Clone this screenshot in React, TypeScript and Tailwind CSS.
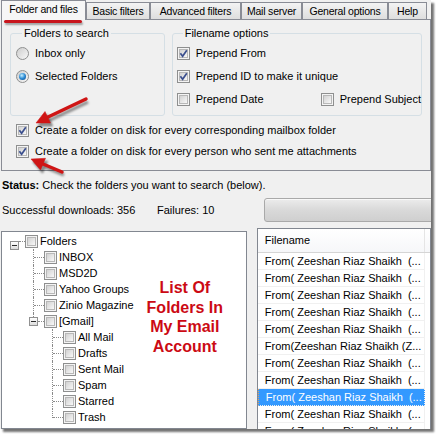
import React from 'react';

const Box = ({ checked = false }: { checked?: boolean }) => (
  <span className="relative flex h-[13px] w-[13px] shrink-0 items-center justify-center border border-[#8e8f8f] bg-[#f4f4f4]">
    <span className="h-[9px] w-[9px] border border-[#b8b8b8] bg-linear-to-br from-[#d2d2d2] to-[#f8f8f8]" />
    {checked && (
      <svg className="absolute left-[1px] top-[1px]" width="9" height="9" viewBox="0 0 9 9">
        <path d="M1.4 4.3 L3.6 7.2 L7.8 1.2" fill="none" stroke="#3b4f8e" strokeWidth="1.7" />
      </svg>
    )}
  </span>
);

const Radio = ({ on = false }: { on?: boolean }) => (
  <span className="flex h-[13px] w-[13px] shrink-0 items-center justify-center rounded-full border border-[#8e8f8f] bg-linear-to-br from-[#cdcdcd] to-[#f8f8f8]">
    {on && (
      <span className="h-[7px] w-[7px] rounded-full bg-[radial-gradient(circle_at_40%_35%,#c8f0ff_0%,#2a8ad4_50%,#0b3f7c_100%)]" />
    )}
  </span>
);

const Minus = () => (
  <span className="absolute top-[4px] flex h-[9px] w-[9px] items-center justify-center border border-[#919191] bg-linear-to-b from-white to-[#dcdcdc]">
    <span className="h-px w-[5px] bg-[#2b2b2b]" />
  </span>
);

const tabs = [
  { label: 'Basic filters', w: 'w-[64px]' },
  { label: 'Advanced filters', w: 'w-[91px]' },
  { label: 'Mail server', w: 'w-[61px]' },
  { label: 'General options', w: 'w-[86px]' },
  { label: 'Help', w: 'w-[39px]' },
];

const level1 = ['INBOX', 'MSD2D', 'Yahoo Groups', 'Zinio Magazine'];
const level2 = ['All Mail', 'Drafts', 'Sent Mail', 'Spam', 'Starred', 'Trash'];

const rows = [
  'From( Zeeshan Riaz Shaikh  (...',
  'From( Zeeshan Riaz Shaikh  (...',
  'From( Zeeshan Riaz Shaikh  (...',
  'From( Zeeshan Riaz Shaikh  (...',
  'From( Zeeshan Riaz Shaikh  (...',
  'From(Zeeshan Riaz Shaikh (Z...',
  'From( Zeeshan Riaz Shaikh  (...',
  'From( Zeeshan Riaz Shaikh  (...',
  'From( Zeeshan Riaz Shaikh  (...',
  'From( Zeeshan Riaz Shaikh  (...',
  'From( Zeeshan Riaz Shaikh  (...',
];

const App = () => {
  return (
    <div className="h-[434px] w-[436px] whitespace-nowrap bg-white font-['Liberation_Sans',Arial,sans-serif] text-[11px] leading-[13px] text-black">
      <div className="relative h-[429px] w-[431px] overflow-hidden bg-[#f0f0f0] shadow-[3px_3px_2px_rgba(0,0,0,0.55)]">
        {/* tabs */}
        <div className="flex h-[19px] items-end pl-px text-[10.5px] tracking-[-0.2px]">
          <div className="relative z-10 -mb-px flex h-[20px] w-[85px] items-center justify-center border border-b-0 border-[#898c95] bg-[#f6f6f6] pb-[3px]">
            Folder and files
            <span className="absolute left-[2px] top-[19px] h-[2.5px] w-[78px] rounded-full bg-[#c8141c] shadow-[1px_2px_2px_rgba(0,0,0,0.35)]" />
          </div>
          {tabs.map((t) => (
            <div
              key={t.label}
              className={`flex h-[17px] items-center justify-center border border-b-0 border-[#898c95] bg-linear-to-b from-[#f3f3f3] to-[#dedede] ${t.w}`}
            >
              {t.label}
            </div>
          ))}
        </div>

        {/* panel */}
        <div className="ml-px h-[152px] w-[430px] border border-[#898c95] bg-[#f0f0f0] px-[8px] pt-[7px]">
          <div className="flex gap-[7px]">
            <fieldset className="h-[89px] w-[158px] rounded-[3px] border border-[#d5dfe5] pl-[5px]">
              <legend className="ml-[6px] px-[2px] leading-[13px]">Folders to search</legend>
              <div className="flex flex-col pt-[2px]">
                <div className="flex h-[23px] items-center gap-[6px]">
                  <Radio />
                  <span>Inbox only</span>
                </div>
                <div className="flex h-[23px] items-center gap-[6px]">
                  <Radio on />
                  <span>Selected Folders</span>
                </div>
              </div>
            </fieldset>
            <fieldset className="h-[89px] w-[253px] rounded-[3px] border border-[#d5dfe5] pl-[4px]">
              <legend className="ml-[6px] px-[2px] leading-[13px]">Filename options</legend>
              <div className="flex flex-col pt-[2px]">
                <div className="flex h-[23px] items-center gap-[6px]">
                  <Box checked />
                  <span>Prepend From</span>
                </div>
                <div className="flex h-[23px] items-center gap-[6px]">
                  <Box checked />
                  <span>Prepend ID to make it unique</span>
                </div>
                <div className="flex h-[22px] items-center">
                  <div className="flex w-[144px] items-center gap-[6px]">
                    <Box />
                    <span>Prepend Date</span>
                  </div>
                  <div className="flex items-center gap-[6px]">
                    <Box />
                    <span>Prepend Subject</span>
                  </div>
                </div>
              </div>
            </fieldset>
          </div>
          <div className="mt-[4px] flex flex-col pl-[6px]">
            <div className="flex h-[21px] items-center gap-[6px]">
              <Box checked />
              <span>Create a folder on disk for every corresponding mailbox folder</span>
            </div>
            <div className="flex h-[21px] items-center gap-[6px]">
              <Box checked />
              <span>Create a folder on disk for every person who sent me attachments</span>
            </div>
          </div>
        </div>

        {/* status */}
        <div className="mt-[7px] h-[14px] pl-[2px] leading-[14px]">
          <span className="font-bold">Status:</span> Check the folders you want to search (below).
        </div>
        <div className="mt-[6px] flex h-[24px] items-center pl-[2px]">
          <span className="w-[155px]">Successful downloads: 356</span>
          <span>Failures: 10</span>
          <div className="ml-auto h-[24px] w-[170px] -mr-[3px] rounded-[3px] border border-[#a9a9a9] bg-linear-to-b from-[#ececec] via-[#d9d9d9] to-[#cfcfcf] shadow-[inset_0_1px_0_#f8f8f8]" />
        </div>

        {/* lower */}
        <div className="mt-[6px] flex gap-[10px] pl-px">
          <div className="relative mt-[3px] h-[198px] w-[247px] border border-[#828790] bg-white pt-px">
            <div className="relative flex h-4 items-center pl-[23px]">
              <span className="absolute left-[8px] top-[4px]"><Minus /></span>
              <span className="absolute left-[17px] top-[8px] w-[6px] border-t border-dotted border-[#8a8a8a]" />
              <Box />
              <span className="ml-[2px]">Folders</span>
            </div>
            {level1.map((n) => (
              <div key={n} className="relative flex h-4 items-center pl-[42px]">
                <span className="absolute left-[31px] top-0 h-4 border-l border-dotted border-[#8a8a8a]" />
                <span className="absolute left-[32px] top-[8px] w-[10px] border-t border-dotted border-[#8a8a8a]" />
                <Box />
                <span className="ml-[2px]">{n}</span>
              </div>
            ))}
            <div className="relative flex h-4 items-center pl-[42px]">
              <span className="absolute left-[31px] top-0 h-[4px] border-l border-dotted border-[#8a8a8a]" />
              <span className="absolute left-[27px] top-0"><Minus /></span>
              <span className="absolute left-[36px] top-[8px] w-[6px] border-t border-dotted border-[#8a8a8a]" />
              <Box />
              <span className="ml-[2px]">[Gmail]</span>
            </div>
            {level2.map((n, i) => (
              <div key={n} className="relative flex h-4 items-center pl-[61px]">
                <span
                  className={`absolute left-[50px] top-0 border-l border-dotted border-[#8a8a8a] ${i === level2.length - 1 ? 'h-[9px]' : 'h-4'}`}
                />
                <span className="absolute left-[51px] top-[8px] w-[10px] border-t border-dotted border-[#8a8a8a]" />
                <Box />
                <span className="ml-[2px]">{n}</span>
              </div>
            ))}
            <div className="absolute right-0 top-[46px] w-[122px] text-center text-[16px] font-bold leading-[19.5px] text-[#cc0a14]">
              List Of
              <br />
              Folders In
              <br />
              My Email
              <br />
              Account
            </div>
          </div>

          <div className="h-[205px] w-[175px] border border-[#828790] bg-white">
            <div className="flex h-[24px] border-b border-[#d5d5d5] bg-linear-to-b from-white to-[#f6f7f9]">
              <div className="flex w-[167px] items-center border-r border-[#e5e5e5] pl-[7px]">Filename</div>
            </div>
            {rows.map((r, i) => (
              <div
                key={i}
                className={`flex h-[17px] w-[167px] items-center whitespace-pre border-b border-r border-[#f0f0f0] pl-[7px] ${
                  i === 8 ? 'border-l border-l-[#e0a060] border-dotted bg-[#3399ff] pl-[6px] text-white' : ''
                }`}
              >
                {r}
              </div>
            ))}
          </div>
        </div>

        {/* annotation arrows */}
        <svg className="pointer-events-none absolute left-0 top-0 z-20" width="431" height="429" viewBox="0 0 431 429">
          <defs>
            <filter id="sh" x="-20%" y="-20%" width="140%" height="140%">
              <feGaussianBlur stdDeviation="1.3" />
            </filter>
          </defs>
          <g transform="translate(2,3)" fill="rgba(0,0,0,0.4)" stroke="rgba(0,0,0,0.4)" filter="url(#sh)">
            <line x1="86" y1="99" x2="47" y2="117.5" strokeWidth="3.5" />
            <polygon points="36,123 50.5,123 45,111.5" />
            <line x1="62" y1="172" x2="43" y2="164" strokeWidth="3.5" />
            <polygon points="31,159 45.5,158.3 40.5,170" />
          </g>
          <g fill="#cf1515" stroke="#cf1515">
            <line x1="86" y1="99" x2="47" y2="117.5" strokeWidth="3.5" strokeLinecap="round" />
            <polygon points="36,123 50.5,123 45,111.5" strokeWidth="0.5" />
            <line x1="62" y1="172" x2="43" y2="164" strokeWidth="3.5" strokeLinecap="round" />
            <polygon points="31,159 45.5,158.3 40.5,170" strokeWidth="0.5" />
          </g>
        </svg>
      </div>
    </div>
  );
};

export default App;
